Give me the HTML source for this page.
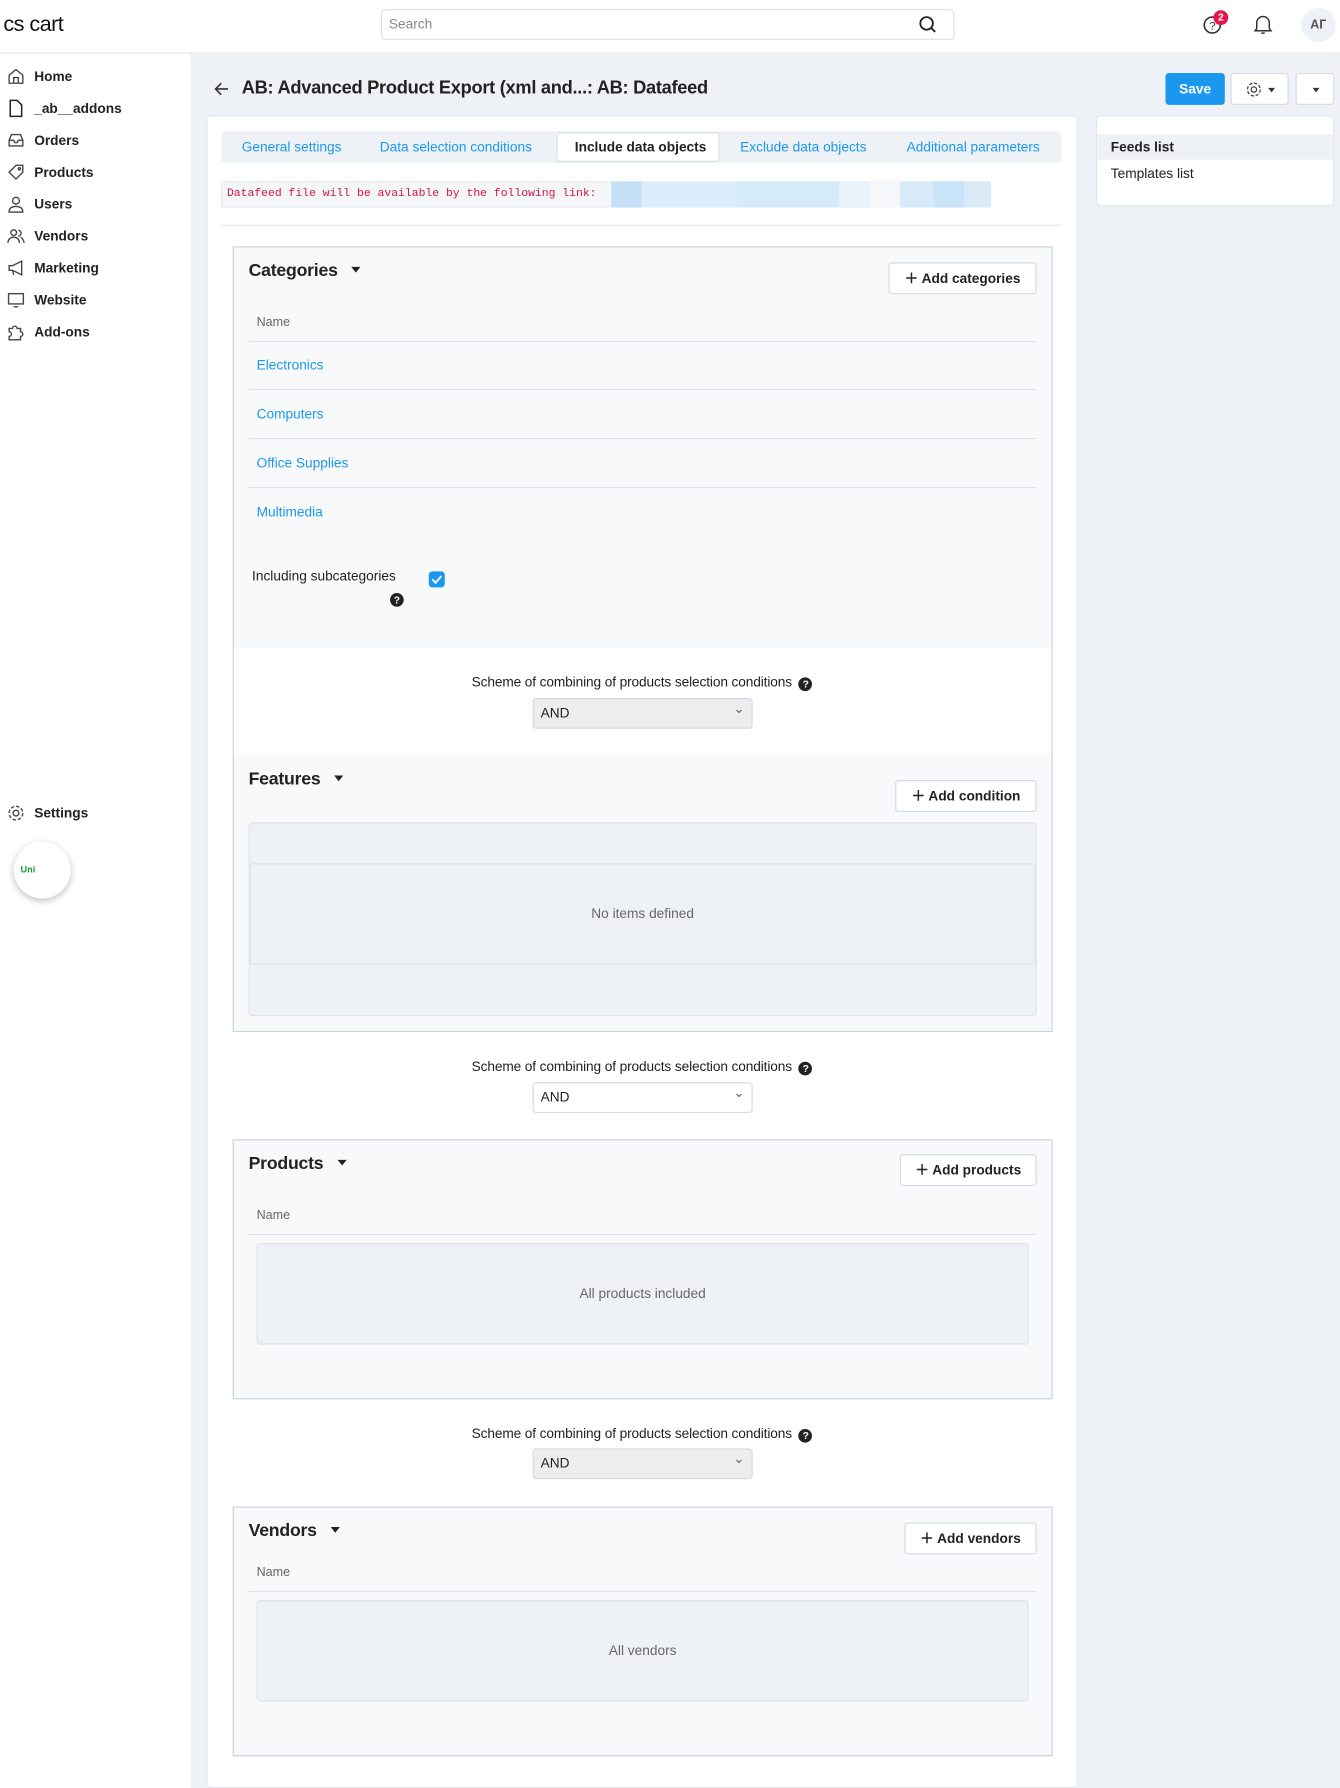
<!DOCTYPE html>
<html><head><meta charset="utf-8"><style>
*{box-sizing:border-box;margin:0;padding:0}
html,body{width:1340px;height:1788px;overflow:hidden;background:#eef2f7}
#w{position:absolute;left:0;top:0;width:1175px;height:1568px;transform:scale(1.14043);transform-origin:0 0;font-family:"Liberation Sans",Arial,sans-serif;font-size:12px;color:#222;background:#eef2f7}
.a{position:absolute}
.hdr{left:0;top:0;width:1175px;height:47px;background:#fff;border-bottom:1px solid #e1e6ee}
.side{left:0;top:47px;width:167px;height:1521px;background:#fff}
.nav{position:absolute;left:0;font-weight:bold;font-size:12px;height:20px;line-height:20px}
.nav svg{position:absolute;left:6px;top:2px}
.nav span{position:absolute;left:30px;white-space:nowrap}
.btn{position:absolute;background:#fff;border:1px solid #d3dae3;border-radius:3px;font-weight:bold;font-size:12px;line-height:26px;text-align:center}
.link{color:#1a98f0}
.row{position:absolute;left:218px;width:690px;border-bottom:1px solid #dde3ea}
.sel{position:absolute;left:467px;width:193px;height:27px;border:1px solid #d3dae3;border-radius:3px;background:#ededed;line-height:25px;padding-left:6px}
.sel:after{content:"⌄";position:absolute;right:6px;top:-4px;color:#666;font-size:12px}
.scheme{position:absolute;left:204px;width:718px;text-align:center;font-size:12px;letter-spacing:-0.1px}
.q{display:inline-block;width:12px;height:12px;border-radius:50%;background:#222;color:#fff;font-size:9px;line-height:12px;text-align:center;font-weight:bold;vertical-align:-1px;margin-left:6px}
.h2{position:absolute;left:218px;font-weight:bold;font-size:15.5px;letter-spacing:-0.2px}
.h2 b{display:inline-block;width:0;height:0;border-left:4px solid transparent;border-right:4px solid transparent;border-top:5px solid #222;margin-left:12px;vertical-align:3px}
.empty{position:absolute;background:#eef2f7;border:1px solid #dde3ea;border-radius:3px;color:#666;text-align:center}
</style></head><body><div id="w">
<div class="a hdr"></div>
<div class="a" style="left:3px;top:11px;font-size:19px;letter-spacing:-0.5px;color:#111">cs cart</div>
<div class="a" style="left:334px;top:8px;width:503px;height:27px;border:1px solid #d9dfe7;border-radius:4px;background:#fff;color:#888;line-height:25px;padding-left:6px">Search</div>
<svg class="a" style="left:805px;top:13px" width="17" height="17" viewBox="0 0 17 17"><circle cx="7.5" cy="7.5" r="5.5" fill="none" stroke="#222" stroke-width="1.6"/><path d="M11.5 11.5L15 15" stroke="#222" stroke-width="1.6"/></svg>
<svg class="a" style="left:1055px;top:13px" width="18" height="18" viewBox="0 0 18 18"><circle cx="8" cy="9" r="7" fill="none" stroke="#333" stroke-width="1.4"/><text x="8" y="13" font-size="10" text-anchor="middle" fill="#333" font-family="Liberation Sans">?</text></svg>
<div class="a" style="left:1064px;top:9px;width:13px;height:13px;border-radius:50%;background:#e8154b;color:#fff;font-size:9px;font-weight:bold;text-align:center;line-height:13px">2</div>
<svg class="a" style="left:1099px;top:12px" width="17" height="19" viewBox="0 0 17 19"><path d="M3 13V8a5.5 5.5 0 0 1 11 0v5l1.5 2h-14z" fill="none" stroke="#333" stroke-width="1.3"/><path d="M7 17h3" stroke="#333" stroke-width="1.3"/></svg>
<div class="a" style="left:1141px;top:7px;width:30px;height:30px;border-radius:50%;background:#eef2f7;color:#555;font-weight:bold;text-align:center;line-height:30px;font-size:11px">АГ</div>

<div class="a side"></div>
<div class="nav" style="top:57px"><svg width="16" height="16" viewBox="0 0 16 16" fill="none" stroke="#444" stroke-width="1.2"><path d="M2 7L8 2l6 5v7H2z"/><path d="M6 14V9h4v5"/></svg><span>Home</span></div>
<div class="nav" style="top:85px"><svg width="16" height="16" viewBox="0 0 16 16" fill="none" stroke="#222" stroke-width="1.3"><path d="M3 1h6l4 4v10H3z"/></svg><span>_ab__addons</span></div>
<div class="nav" style="top:113px"><svg width="16" height="16" viewBox="0 0 16 16" fill="none" stroke="#444" stroke-width="1.2"><path d="M2 8l2-5h8l2 5v5H2z"/><path d="M2 8h4l1 2h2l1-2h4"/></svg><span>Orders</span></div>
<div class="nav" style="top:141px"><svg width="16" height="16" viewBox="0 0 16 16" fill="none" stroke="#444" stroke-width="1.2"><path d="M2 8l6-6h6v6l-6 6z"/><circle cx="11" cy="5" r="1"/></svg><span>Products</span></div>
<div class="nav" style="top:169px"><svg width="16" height="16" viewBox="0 0 16 16" fill="none" stroke="#444" stroke-width="1.2"><circle cx="8" cy="5" r="3"/><path d="M2 15c0-4 3-5 6-5s6 1 6 5z"/></svg><span>Users</span></div>
<div class="nav" style="top:197px"><svg width="16" height="16" viewBox="0 0 16 16" fill="none" stroke="#444" stroke-width="1.2"><circle cx="6" cy="5" r="2.5"/><path d="M1 14c0-3 2-5 5-5s5 2 5 5"/><path d="M10 3a2.5 2.5 0 0 1 0 5M12 9c2 1 3 3 3 5"/></svg><span>Vendors</span></div>
<div class="nav" style="top:225px"><svg width="16" height="16" viewBox="0 0 16 16" fill="none" stroke="#444" stroke-width="1.2"><path d="M2 6h3l8-4v12l-8-4H2z"/><path d="M5 10l1 4"/></svg><span>Marketing</span></div>
<div class="nav" style="top:253px"><svg width="16" height="16" viewBox="0 0 16 16" fill="none" stroke="#444" stroke-width="1.2"><rect x="1.5" y="2.5" width="13" height="9"/><path d="M6 14h4"/></svg><span>Website</span></div>
<div class="nav" style="top:281px"><svg width="16" height="16" viewBox="0 0 16 16" fill="none" stroke="#444" stroke-width="1.2"><path d="M2 5h3a2 2 0 0 1 4 0h3v3a2 2 0 0 1 0 4v3H2v-3a2 2 0 0 0 0-4z"/></svg><span>Add-ons</span></div>
<div class="nav" style="top:703px"><svg width="16" height="16" viewBox="0 0 16 16" fill="none" stroke="#444" stroke-width="1.2"><circle cx="8" cy="8" r="2.5"/><circle cx="8" cy="8" r="6" stroke-dasharray="3 1.7"/></svg><span>Settings</span></div>
<div class="a" style="left:12px;top:738px;width:50px;height:50px;border-radius:50%;background:#fff;box-shadow:0 2px 6px rgba(0,0,0,.25);color:#1a9e3a;font-size:8px;font-weight:bold;line-height:50px;padding-left:6px">Uni</div>

<svg class="a" style="left:187px;top:71px" width="14" height="14" viewBox="0 0 14 14" fill="none" stroke="#333" stroke-width="1.4"><path d="M13 7H2M7 2L2 7l5 5"/></svg>
<div class="a" style="left:212px;top:69px;font-size:16px;font-weight:bold;letter-spacing:-0.25px">AB: Advanced Product Export (xml and...: AB: Datafeed</div>
<div class="btn" style="left:1022px;top:64px;width:52px;height:28px;background:#1a98f0;border-color:#1a98f0;color:#fff">Save</div>
<div class="btn" style="left:1079px;top:64px;width:51px;height:28px"><svg style="position:absolute;left:12px;top:6px" width="15" height="15" viewBox="0 0 16 16" fill="none" stroke="#444" stroke-width="1.2"><circle cx="8" cy="8" r="2.5"/><circle cx="8" cy="8" r="6" stroke-dasharray="3 1.7"/></svg><b style="position:absolute;left:32px;top:12px;border-left:3px solid transparent;border-right:3px solid transparent;border-top:4px solid #333"></b></div>
<div class="btn" style="left:1136px;top:64px;width:34px;height:28px"><b style="position:absolute;left:14px;top:12px;border-left:3px solid transparent;border-right:3px solid transparent;border-top:4px solid #333"></b></div>

<div class="a" style="left:181px;top:101px;width:764px;height:1467px;background:#fff;border:1px solid #e1e6ee;border-radius:4px"></div>
<div class="a" style="left:961px;top:101px;width:209px;height:80px;background:#fff;border:1px solid #e1e6ee;border-radius:4px"></div>
<div class="a" style="left:962px;top:118px;width:207px;height:22px;background:#eef2f7;font-weight:bold;line-height:22px;padding-left:12px">Feeds list</div>
<div class="a" style="left:974px;top:145px">Templates list</div>

<div class="a" style="left:194px;top:115px;width:737px;height:28px;background:#eef2f7;border-radius:4px"></div>
<div class="a" style="left:488px;top:116px;width:143px;height:26px;background:#fff;border:1px solid #d9dfe7;border-radius:3px"></div>
<div class="a link" style="left:212px;top:122px">General settings</div>
<div class="a link" style="left:333px;top:122px">Data selection conditions</div>
<div class="a" style="left:504px;top:122px;font-weight:bold">Include data objects</div>
<div class="a link" style="left:649px;top:122px">Exclude data objects</div>
<div class="a link" style="left:795px;top:122px">Additional parameters</div>

<div class="a" style="left:194px;top:159px;width:675px;height:23px;background:#f5f6f8;border:1px solid #e4e8ee"></div>
<div class="a" style="left:199px;top:165px;font-family:'Liberation Mono',monospace;font-size:10px;color:#d6134c">Datafeed file will be available by the following link:</div>
<div class="a" style="left:536px;top:159px;width:333px;height:23px;background:linear-gradient(90deg,#c6e1f7 0 8%,#dceefb 8% 33%,#d6ebfa 33% 60%,#e8f2fb 60% 68%,#f5f7fa 68% 76%,#d6eafa 76% 85%,#c9e3f8 85% 93%,#d9ebf8 93%)"></div>
<div class="a" style="left:194px;top:197px;width:737px;height:1px;background:#e4e8ee"></div>

<div class="a" style="left:204px;top:216px;width:719px;height:689px;background:#f8f9fa;border:1px solid #c9d3de"></div>
<div class="a" style="left:205px;top:568px;width:717px;height:94px;background:#fff"></div>
<div class="h2" style="top:229px">Categories<b></b></div>
<div class="btn" style="left:779px;top:230px;width:130px;height:28px">＋ Add categories</div>
<div class="a" style="left:225px;top:277px;color:#666;font-size:11px">Name</div>
<div class="row" style="top:299px;height:1px"></div>
<div class="a link" style="left:225px;top:313px">Electronics</div>
<div class="row" style="top:341px;height:1px"></div>
<div class="a link" style="left:225px;top:356px">Computers</div>
<div class="row" style="top:384px;height:1px"></div>
<div class="a link" style="left:225px;top:399px">Office Supplies</div>
<div class="row" style="top:427px;height:1px"></div>
<div class="a link" style="left:225px;top:442px">Multimedia</div>
<div class="a" style="left:221px;top:498px">Including subcategories</div>
<div class="a" style="left:342px;top:517px"><span class="q" style="margin:0">?</span></div>
<div class="a" style="left:376px;top:501px;width:14px;height:14px;border-radius:3px;background:#1a98f0"><svg width="14" height="14" viewBox="0 0 14 14"><path d="M3 7l3 3 5-6" fill="none" stroke="#fff" stroke-width="1.6"/></svg></div>

<div class="scheme" style="top:591px">Scheme of combining of products selection conditions<span class="q">?</span></div>
<div class="sel" style="top:612px">AND</div>

<div class="h2" style="top:675px">Features<b></b></div>
<div class="btn" style="left:785px;top:684px;width:124px;height:28px">＋ Add condition</div>
<div class="a" style="left:218px;top:721px;width:691px;height:170px;background:#eef2f7;border:1px solid #dde3ea;border-radius:3px"></div>
<div class="empty" style="left:219px;top:757px;width:689px;height:89px;line-height:87px">No items defined</div>

<div class="scheme" style="top:928px">Scheme of combining of products selection conditions<span class="q">?</span></div>
<div class="sel" style="top:949px;background:#fff">AND</div>

<div class="a" style="left:204px;top:999px;width:719px;height:228px;background:#f8f9fa;border:1px solid #c9d3de"></div>
<div class="h2" style="top:1012px">Products<b></b></div>
<div class="btn" style="left:789px;top:1012px;width:120px;height:28px">＋ Add products</div>
<div class="a" style="left:225px;top:1060px;color:#666;font-size:11px">Name</div>
<div class="row" style="top:1082px;height:1px"></div>
<div class="empty" style="left:225px;top:1090px;width:677px;height:89px;line-height:87px">All products included</div>

<div class="scheme" style="top:1250px">Scheme of combining of products selection conditions<span class="q">?</span></div>
<div class="sel" style="top:1270px">AND</div>

<div class="a" style="left:204px;top:1321px;width:719px;height:219px;background:#f8f9fa;border:1px solid #c9d3de"></div>
<div class="h2" style="top:1334px">Vendors<b></b></div>
<div class="btn" style="left:793px;top:1335px;width:116px;height:28px">＋ Add vendors</div>
<div class="a" style="left:225px;top:1373px;color:#666;font-size:11px">Name</div>
<div class="row" style="top:1395px;height:1px"></div>
<div class="empty" style="left:225px;top:1403px;width:677px;height:89px;line-height:87px">All vendors</div>
</div></body></html>
